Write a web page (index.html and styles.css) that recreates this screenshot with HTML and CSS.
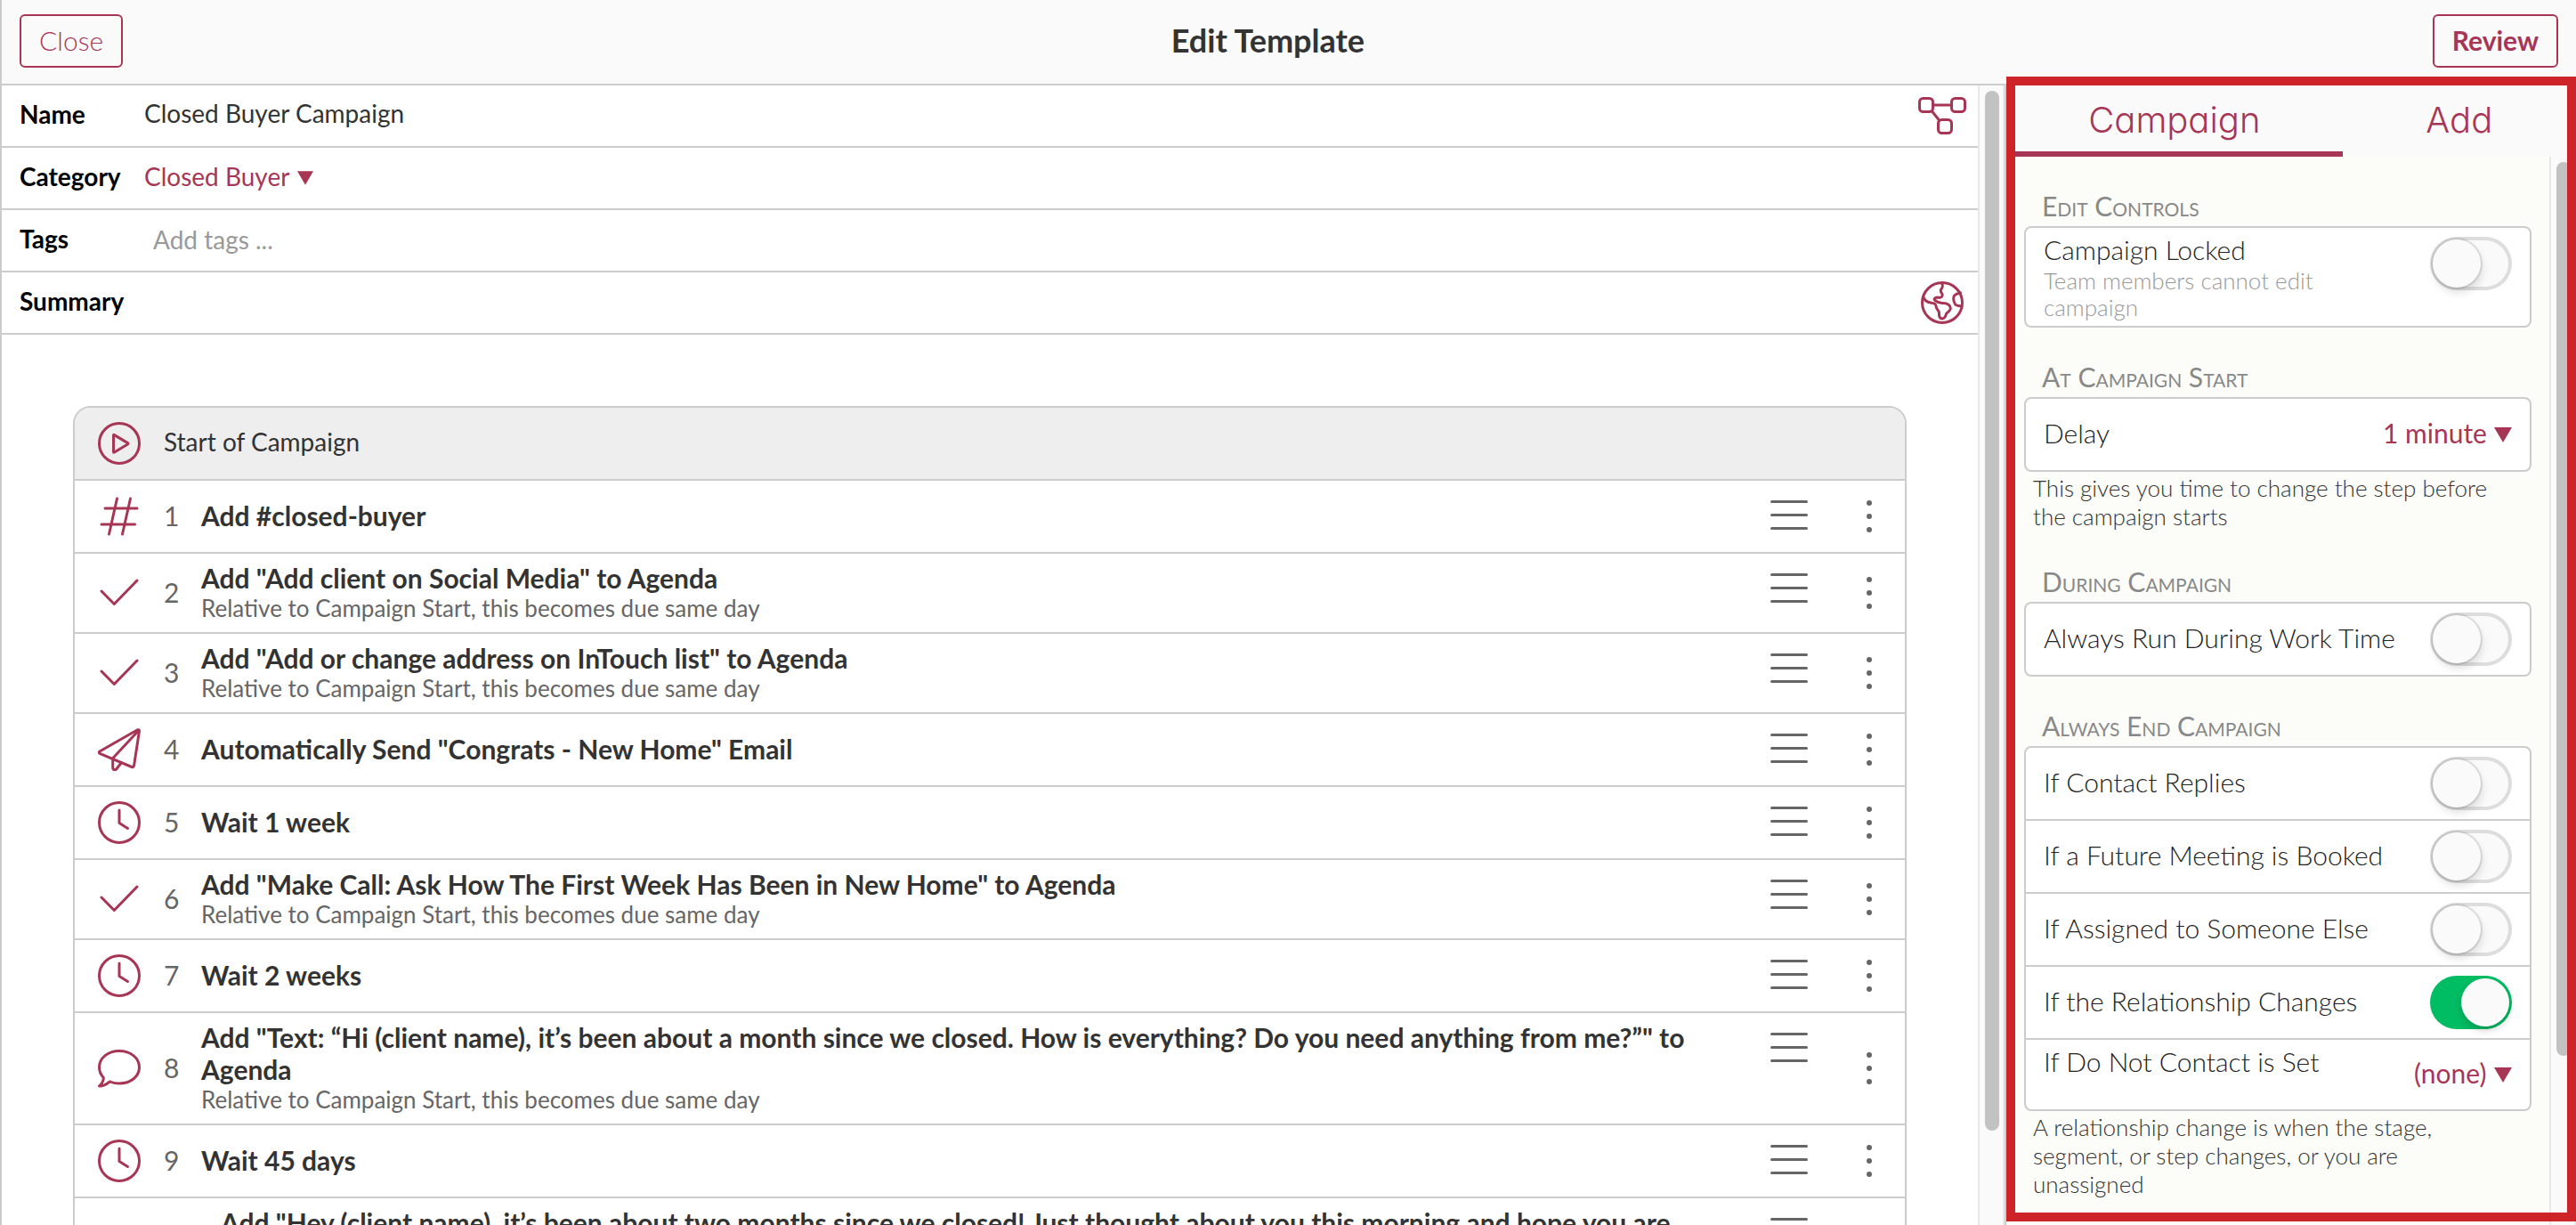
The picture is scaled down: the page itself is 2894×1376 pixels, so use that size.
FILE: index.html
```html
<!DOCTYPE html>
<html lang="en">
<head>
    <meta charset="UTF-8">
    <meta name="viewport" content="width=device-width, initial-scale=1.0">
    <title>Edit Template</title>
    <link rel="stylesheet" href="styles.css">
</head>
<body>
    <!-- Icon set -->
    <svg class="sprite" aria-hidden="true">
        <symbol id="i-play" viewBox="0 0 48 48"><circle cx="24" cy="24" r="22.5"/><path d="M17.5 15v18.5q0 1 1 .5l15-9q1-.7 0-1.4l-15-9q-1-.6-1 .4z"/></symbol>
        <symbol id="i-hash" viewBox="0 0 48 48"><path d="M21.5 4 12.5 44M36.5 4l-9 40M8 15h36M4 33h37.5"/></symbol>
        <symbol id="i-check" viewBox="0 0 48 48"><path d="M4 22l14.3 14.5L44 10"/></symbol>
        <symbol id="i-plane" viewBox="0 0 48 48"><path d="M44.5 1.8 2 26q-1.5 1.2 0 2.4l36 15.1q2 .5 2.5-1.2L46.5 3q0-1.8-2-1.2zM46 2.3 16.7 33.7V44.5q.3 2.3 2.5 2.2 1 0 2-1.4l5-6.3"/></symbol>
        <symbol id="i-clock" viewBox="0 0 48 48"><circle cx="24" cy="24" r="22.5"/><path d="M24 10v14.5l9.5 6"/></symbol>
        <symbol id="i-chat" viewBox="0 0 48 48"><path d="M24 4.500c13 0 22.500 8 22.500 18.300S37 41 24 41c-3.600 0-6.500-.4-9-1.500-1-.6-2-.5-3 .3-3 2.600-6 4-10.500 4.200 3-2.600 4.800-6 4.800-9.500C3 31 1.500 27.500 1.500 22.800 1.500 12.500 11 4.500 24 4.500z"/></symbol>
        <symbol id="i-drag" viewBox="0 0 48 48"><path d="M4.500 9.500h39M4.500 24.500h39M4.500 39.500h39"/></symbol>
        <symbol id="i-dots" viewBox="0 0 6 36"><circle cx="3" cy="3" r="3"/><circle cx="3" cy="18" r="3"/><circle cx="3" cy="33" r="3"/></symbol>
        <symbol id="i-flow" viewBox="0 0 54 42"><rect x="1.5" y="1.5" width="15" height="15" rx="4"/><rect x="37.5" y="1.5" width="15" height="15" rx="4"/><rect x="22.5" y="25.5" width="15" height="15" rx="4"/><path d="M17 9h20M15.5 16l8 10"/></symbol>
        <symbol id="i-globe" viewBox="0 0 48 48"><circle cx="24" cy="24" r="22.5"/><path d="M23 2c3 3 1 5-.5 7.500-1.200 2.500 2 4 1.700 6-.5 3-3 3-5.700 2.500-3 .3-4.500 2-2.500 3.500 2.500 2 5.500 3.300 9 3 5 0 8.500 2.500 8.300 6-.2 3.500-4.300 4-5 6.500-.5 2.500-1.300 4.500-4.300 5-2.500-.3-3.500-2.500-3.500-4.500.2-2-.3-4-1.500-5.500-2.300-1.500-1.300-5-3-6.500-1.500-1-3.300-1-5-1.500-4-.5-7-2.500-8.200-6.500M44.500 13c-3 .5-5.500 1.500-7 3-1.500 3.500-.5 7.500 1.300 10.300 2 1.200 4.500 1.500 7.200 1.700"/></symbol>
        <symbol id="i-caret" viewBox="0 0 20 17"><path d="M0 0h20L10 17z"/></symbol>
    </svg>

    <div class="app">
        <header class="topbar">
            <button class="btn btn-light" type="button">Close</button>
            <h1 class="title">Edit Template</h1>
            <button class="btn btn-bold" type="button">Review</button>
        </header>

        <div class="workspace">
            <main class="editor">
                <form class="fields">
                    <div class="field">
                        <label for="name">Name</label>
                        <input id="name" type="text" value="Closed Buyer Campaign">
                        <button class="field-icon" type="button" aria-label="Flow"><svg class="icon icon-flow"><use href="#i-flow"/></svg></button>
                    </div>
                    <div class="field">
                        <label for="category">Category</label>
                        <select id="category" class="picker"><option>Closed Buyer</option></select>
                        <svg class="caret caret-small"><use href="#i-caret"/></svg>
                    </div>
                    <div class="field">
                        <label for="tags">Tags</label>
                        <input id="tags" class="tags" type="text" placeholder="Add tags ...">
                    </div>
                    <div class="field">
                        <label for="summary">Summary</label>
                        <input id="summary" type="text">
                        <button class="field-icon" type="button" aria-label="Language"><svg class="icon"><use href="#i-globe"/></svg></button>
                    </div>
                </form>

                <section class="steps">
                    <div class="step step-start">
                        <svg class="icon"><use href="#i-play"/></svg>
                        <p>Start of Campaign</p>
                    </div>
                    <div class="step">
                        <svg class="icon"><use href="#i-hash"/></svg>
                        <span class="num">1</span>
                        <div class="text"><h2>Add #closed-buyer</h2></div>
                        <button class="drag" type="button" aria-label="Move"><svg class="icon"><use href="#i-drag"/></svg></button>
                        <button class="more" type="button" aria-label="More"><svg class="dots"><use href="#i-dots"/></svg></button>
                    </div>
                    <div class="step">
                        <svg class="icon"><use href="#i-check"/></svg>
                        <span class="num">2</span>
                        <div class="text">
                            <h2>Add "Add client on Social Media" to Agenda</h2>
                            <p>Relative to Campaign Start, this becomes due same day</p>
                        </div>
                        <button class="drag" type="button" aria-label="Move"><svg class="icon"><use href="#i-drag"/></svg></button>
                        <button class="more" type="button" aria-label="More"><svg class="dots"><use href="#i-dots"/></svg></button>
                    </div>
                    <div class="step">
                        <svg class="icon"><use href="#i-check"/></svg>
                        <span class="num">3</span>
                        <div class="text">
                            <h2>Add "Add or change address on InTouch list" to Agenda</h2>
                            <p>Relative to Campaign Start, this becomes due same day</p>
                        </div>
                        <button class="drag" type="button" aria-label="Move"><svg class="icon"><use href="#i-drag"/></svg></button>
                        <button class="more" type="button" aria-label="More"><svg class="dots"><use href="#i-dots"/></svg></button>
                    </div>
                    <div class="step">
                        <svg class="icon"><use href="#i-plane"/></svg>
                        <span class="num">4</span>
                        <div class="text"><h2>Automatically Send "Congrats - New Home" Email</h2></div>
                        <button class="drag" type="button" aria-label="Move"><svg class="icon"><use href="#i-drag"/></svg></button>
                        <button class="more" type="button" aria-label="More"><svg class="dots"><use href="#i-dots"/></svg></button>
                    </div>
                    <div class="step">
                        <svg class="icon"><use href="#i-clock"/></svg>
                        <span class="num">5</span>
                        <div class="text"><h2>Wait 1 week</h2></div>
                        <button class="drag" type="button" aria-label="Move"><svg class="icon"><use href="#i-drag"/></svg></button>
                        <button class="more" type="button" aria-label="More"><svg class="dots"><use href="#i-dots"/></svg></button>
                    </div>
                    <div class="step">
                        <svg class="icon"><use href="#i-check"/></svg>
                        <span class="num">6</span>
                        <div class="text">
                            <h2>Add "Make Call: Ask How The First Week Has Been in New Home" to Agenda</h2>
                            <p>Relative to Campaign Start, this becomes due same day</p>
                        </div>
                        <button class="drag" type="button" aria-label="Move"><svg class="icon"><use href="#i-drag"/></svg></button>
                        <button class="more" type="button" aria-label="More"><svg class="dots"><use href="#i-dots"/></svg></button>
                    </div>
                    <div class="step">
                        <svg class="icon"><use href="#i-clock"/></svg>
                        <span class="num">7</span>
                        <div class="text"><h2>Wait 2 weeks</h2></div>
                        <button class="drag" type="button" aria-label="Move"><svg class="icon"><use href="#i-drag"/></svg></button>
                        <button class="more" type="button" aria-label="More"><svg class="dots"><use href="#i-dots"/></svg></button>
                    </div>
                    <div class="step">
                        <svg class="icon"><use href="#i-chat"/></svg>
                        <span class="num">8</span>
                        <div class="text">
                            <h2>Add "Text: “Hi (client name), it’s been about a month since we closed. How is everything? Do you need anything from me?”" to Agenda</h2>
                            <p>Relative to Campaign Start, this becomes due same day</p>
                        </div>
                        <button class="drag" type="button" aria-label="Move"><svg class="icon"><use href="#i-drag"/></svg></button>
                        <button class="more" type="button" aria-label="More"><svg class="dots"><use href="#i-dots"/></svg></button>
                    </div>
                    <div class="step">
                        <svg class="icon"><use href="#i-clock"/></svg>
                        <span class="num">9</span>
                        <div class="text"><h2>Wait 45 days</h2></div>
                        <button class="drag" type="button" aria-label="Move"><svg class="icon"><use href="#i-drag"/></svg></button>
                        <button class="more" type="button" aria-label="More"><svg class="dots"><use href="#i-dots"/></svg></button>
                    </div>
                    <div class="step">
                        <svg class="icon"><use href="#i-chat"/></svg>
                        <span class="num num-wide">10</span>
                        <div class="text">
                            <h2>Add "Hey (client name), it’s been about two months since we closed! Just thought about you this morning and hope you are doing well" to Agenda</h2>
                            <p>Relative to Campaign Start, this becomes due same day</p>
                        </div>
                        <button class="drag" type="button" aria-label="Move"><svg class="icon"><use href="#i-drag"/></svg></button>
                        <button class="more" type="button" aria-label="More"><svg class="dots"><use href="#i-dots"/></svg></button>
                    </div>
                </section>
            </main>

            <div class="scrollbar"><div class="thumb" style="height: 92.1%"></div></div>

            <aside class="panel">
                <nav class="tabs">
                    <button class="tab tab-active" type="button">Campaign</button>
                    <button class="tab" type="button">Add</button>
                </nav>
                <div class="panel-body">
                    <div class="settings">
                        <h3>Edit Controls</h3>
                        <div class="card">
                            <div class="row row-top">
                                <div class="row-text">
                                    <label for="locked">Campaign Locked</label>
                                    <p>Team members cannot edit campaign</p>
                                </div>
                                <input id="locked" class="toggle" type="checkbox">
                            </div>
                        </div>

                        <h3>At Campaign Start</h3>
                        <div class="card">
                            <div class="row">
                                <label for="delay">Delay</label>
                                <select id="delay" class="picker"><option>1 minute</option></select>
                                <svg class="caret"><use href="#i-caret"/></svg>
                            </div>
                        </div>
                        <p class="note">This gives you time to change the step before the campaign starts</p>

                        <h3>During Campaign</h3>
                        <div class="card">
                            <div class="row">
                                <label for="worktime">Always Run During Work Time</label>
                                <input id="worktime" class="toggle" type="checkbox">
                            </div>
                        </div>

                        <h3>Always End Campaign</h3>
                        <div class="card">
                            <div class="row">
                                <label for="replies">If Contact Replies</label>
                                <input id="replies" class="toggle" type="checkbox">
                            </div>
                            <div class="row">
                                <label for="meeting">If a Future Meeting is Booked</label>
                                <input id="meeting" class="toggle" type="checkbox">
                            </div>
                            <div class="row">
                                <label for="assigned">If Assigned to Someone Else</label>
                                <input id="assigned" class="toggle" type="checkbox">
                            </div>
                            <div class="row">
                                <label for="relationship">If the Relationship Changes</label>
                                <input id="relationship" class="toggle" type="checkbox" checked>
                            </div>
                            <div class="row row-last">
                                <label for="dnc">If Do Not Contact is Set</label>
                                <select id="dnc" class="picker"><option>(none)</option></select>
                                <svg class="caret"><use href="#i-caret"/></svg>
                            </div>
                        </div>
                        <p class="note">A relationship change is when the stage, segment, or step changes, or you are unassigned</p>
                    </div>
                    <div class="scrollbar"><div class="thumb" style="height: 84.5%"></div></div>
                </div>
            </aside>
        </div>
    </div>
</body>
</html>
```

FILE: styles.css
```css
* {
    margin: 0;
    padding: 0;
    box-sizing: border-box;
}

body {
    font-family: Lato, "Liberation Sans", sans-serif;
    font-size: 28px;
    color: #333;
    background: #fff;
}

button, input, select {
    font: inherit;
    color: inherit;
    background: none;
    border: none;
    outline: none;
}

button, select {
    cursor: pointer;
}

.sprite {
    display: none;
}

.app {
    height: 100vh;
    display: flex;
    flex-direction: column;
    border-left: 2px solid #ccc;
    overflow: hidden;
}

/* Top bar */
.topbar {
    display: flex;
    align-items: center;
    height: 96px;
    flex: none;
    padding: 0 20px 2px;
    background: #fafafa;
    border-bottom: 2px solid #ccc;
}

.title {
    flex: 1;
    padding: 0 22px 2px 0;
    font-size: 36px;
    line-height: 48px;
    text-align: center;
}

.btn {
    height: 60px;
    padding: 0 20px 3px;
    border: 2px solid #a73656;
    border-radius: 6px;
    color: #a73656;
    font-size: 30px;
}

.btn-light {
    font-weight: 300;
}

.btn-bold {
    font-weight: 700;
}

.workspace {
    flex: 1;
    display: flex;
    min-height: 0;
}

.editor {
    flex: 1;
    min-width: 0;
    overflow: hidden;
}

/* Template fields */
.field {
    display: flex;
    align-items: center;
    height: 70px;
    padding-left: 20px;
    border-bottom: 2px solid #ccc;
}

.field label {
    width: 140px;
    padding-bottom: 4px;
    font-weight: 700;
    color: #000;
}

.field input {
    flex: 1;
    min-width: 0;
    height: 60px;
    padding-bottom: 6px;
}

.field .tags {
    padding-left: 10px;
    padding-bottom: 2px;
}

.tags::placeholder {
    color: #999;
}

.field-icon {
    display: flex;
    align-items: center;
    justify-content: center;
    width: 80px;
    height: 68px;
}

.picker {
    appearance: none;
    color: #a73656;
    height: 60px;
    padding-bottom: 4px;
}

.caret {
    width: 20px;
    height: 17px;
    margin-left: 8px;
    fill: #a73656;
}

.caret-small {
    width: 18px;
    height: 16px;
}

.icon {
    flex: none;
    width: 48px;
    height: 48px;
    fill: none;
    stroke: #a73656;
    stroke-width: 3;
    stroke-linecap: round;
    stroke-linejoin: round;
}

.icon-flow {
    width: 54px;
    height: 42px;
}

/* Campaign steps */
.steps {
    margin: 80px 80px 0;
    border: 2px solid #ccc;
    border-radius: 20px 20px 0 0;
    overflow: hidden;
}

.step {
    display: flex;
    align-items: center;
    padding-left: 26px;
    border-bottom: 2px solid #ccc;
}

.step-start {
    height: 82px;
    background: #eee;
}

.step-start p {
    padding: 0 26px 4px;
}

.num {
    width: 68px;
    padding: 0 0 2px 26px;
    font-size: 30px;
    color: #666;
}

.num-wide {
    width: 90px;
}

.text {
    flex: 1;
    padding: 9px 32px 11px 0;
}

.text h2 {
    font-size: 30px;
    line-height: 36px;
}

.step .text:has(h2:only-child) {
    padding: 21px 32px 23px 0;
}

.text p {
    font-size: 26px;
    line-height: 32px;
    color: #666;
}

.drag {
    align-self: flex-start;
    width: 100px;
    height: 76px;
    display: flex;
    align-items: center;
    justify-content: center;
}

.drag .icon {
    stroke: #666;
}

.more {
    display: flex;
    justify-content: center;
    width: 80px;
}

.dots {
    width: 6px;
    height: 36px;
    fill: #666;
}

/* Scroll tracks */
.scrollbar {
    flex: none;
    width: 30px;
    padding: 6px;
    background: #fafafa;
    border-left: 2px solid #e8e8e8;
    border-right: 2px solid #e8e8e8;
}

.thumb {
    width: 16px;
    border-radius: 8px;
    background: #c2c2c2;
}

/* Settings panel */
.panel {
    position: relative;
    flex: none;
    width: 642px;
    display: flex;
    flex-direction: column;
    background: #fafafa;
    border-left: 2px solid #ccc;
}

.panel::after {
    content: "";
    position: absolute;
    inset: -10px 0 4px 0;
    border: 10px solid #cd2329;
    pointer-events: none;
}

.tabs {
    display: flex;
    height: 80px;
    flex: none;
}

.tab {
    flex: 41;
    padding-top: 3px;
    border-bottom: 6px solid transparent;
    font-family: Inter, sans-serif;
    font-feature-settings: "cv11";
    font-size: 40px;
    font-weight: 300;
    color: #a73656;
}

.tab-active {
    flex: 59;
    border-bottom-color: #a73656;
}

.panel-body {
    flex: 1;
    min-height: 0;
    display: flex;
}

.settings {
    flex: 1;
    padding: 0 20px;
    background: #fcfdf8;
    overflow: hidden;
}

.settings h3 {
    height: 78px;
    padding: 39px 20px 0;
    font-size: 30px;
    font-weight: 400;
    font-variant: small-caps;
    line-height: 32px;
    color: #888;
}

.card {
    background: #fff;
    border: 2px solid #ccc;
    border-radius: 8px;
}

.row {
    display: flex;
    align-items: center;
    height: 80px;
    padding: 0 20px;
    font-size: 30px;
    color: #222;
}

.row + .row {
    height: 82px;
    border-top: 2px solid #ccc;
}

.row label {
    flex: 1;
    padding-bottom: 4px;
    font-weight: 300;
}

.row-top {
    height: 110px;
    align-items: flex-start;
    padding: 4px 20px;
}

.row-text {
    flex: 1;
    padding-right: 20px;
}

.row-top label {
    display: block;
    line-height: 40px;
    padding: 0;
}

.row-top p {
    font-size: 26px;
    font-weight: 300;
    line-height: 30px;
    color: #999;
}

.row-top .toggle {
    margin-top: 6px;
}

.row + .row-last {
    height: 80px;
}

.row-last label {
    align-self: flex-start;
    padding-top: 4px;
    line-height: 40px;
}

.note {
    padding: 2px 32px 2px 10px;
    font-size: 26px;
    font-weight: 300;
    line-height: 32px;
    color: #333;
}

.toggle {
    appearance: none;
    flex: none;
    width: 92px;
    height: 60px;
    padding: 3px;
    border-radius: 30px;
    background: #fafafa;
    box-shadow: inset 0 0 0 4px #ddd;
    cursor: pointer;
}

.toggle::before {
    content: "";
    display: block;
    width: 54px;
    height: 54px;
    border-radius: 50%;
    background: #fafafa;
    box-shadow: 0 0 0 2px rgba(0,0,0,0.1), 2px 6px 10px rgba(0,0,0,0.12);
}

.toggle:checked {
    background: #00bd63;
    box-shadow: none;
}

.toggle:checked::before {
    margin-left: 32px;
    box-shadow: 0 4px 8px rgba(0,0,0,0.2);
}
```
